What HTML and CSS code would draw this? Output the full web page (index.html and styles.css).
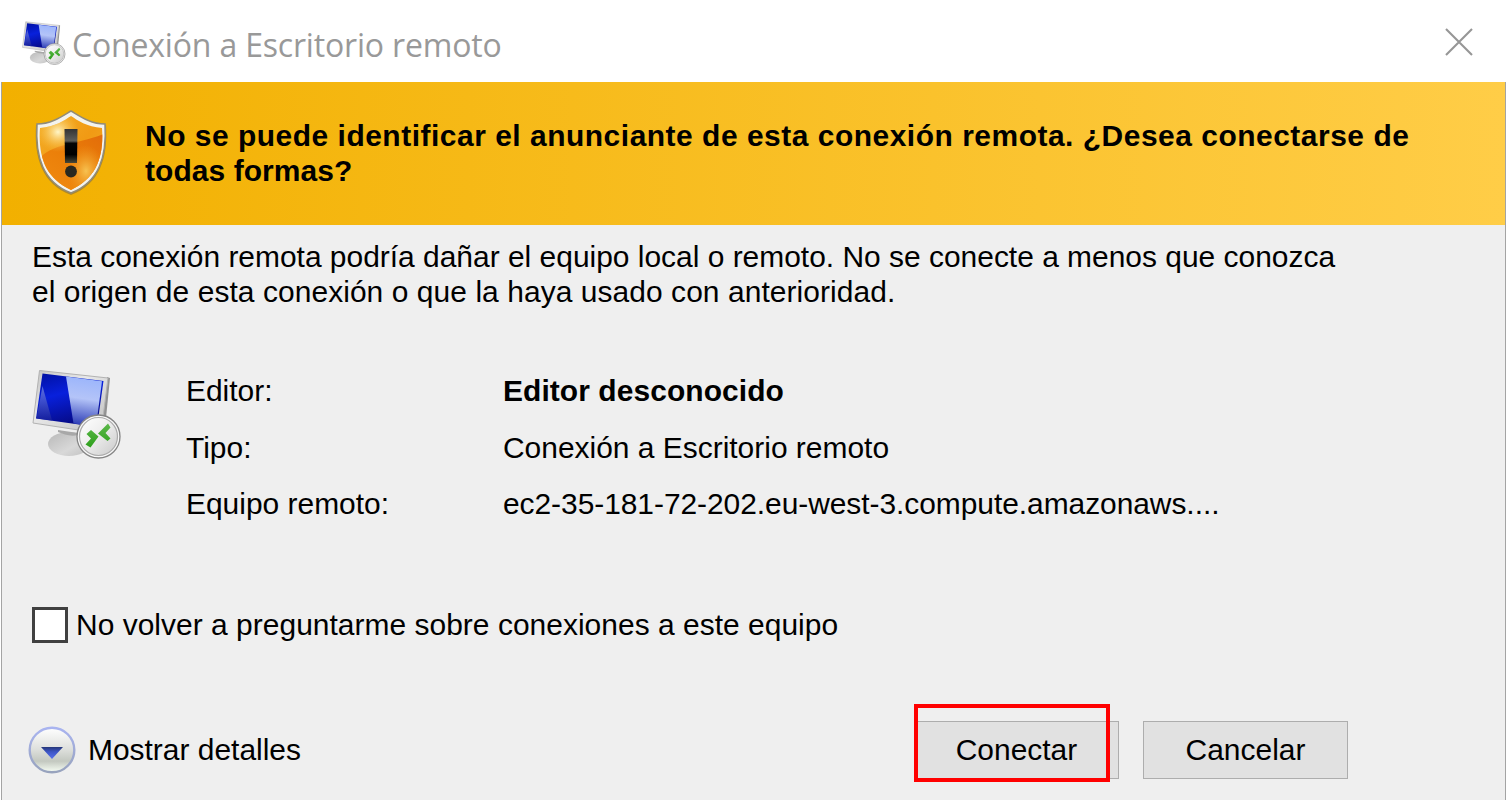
FILE: index.html
```html
<!DOCTYPE html>
<html lang="es">
<head>
<meta charset="utf-8">
<title>Conexión a Escritorio remoto</title>
<link rel="stylesheet" href="styles.css">
</head>
<body>
<svg width="0" height="0" class="defs" aria-hidden="true">
  <defs>
    <linearGradient id="screen" x1="0" y1="0" x2="0.35" y2="1"><stop offset="0" stop-color="#0010a0"/><stop offset=".45" stop-color="#0820dc"/><stop offset="1" stop-color="#060a86"/></linearGradient>
    <linearGradient id="glare" x1="0.1" y1="0" x2="0" y2="1"><stop offset="0" stop-color="#9db6fb"/><stop offset=".4" stop-color="#b4c4f8"/><stop offset="1" stop-color="#1c2cae"/></linearGradient>
    <linearGradient id="spark" x1="0" y1="0" x2="0" y2="1"><stop offset="0" stop-color="#8092ea"/><stop offset="1" stop-color="#1a249c"/></linearGradient>
    <linearGradient id="frame" x1="0" y1="0" x2="1" y2="1"><stop offset="0" stop-color="#c4c4c4"/><stop offset=".4" stop-color="#e8e8e8"/><stop offset="1" stop-color="#bdbdbd"/></linearGradient>
    <linearGradient id="foot" x1="0" y1="0" x2="1" y2="1"><stop offset="0" stop-color="#b8b8b8"/><stop offset=".6" stop-color="#d8d8d8"/><stop offset="1" stop-color="#c0c0c0"/></linearGradient>
    <linearGradient id="badge" x1="0" y1="0" x2="1" y2="1"><stop offset="0" stop-color="#fff"/><stop offset=".45" stop-color="#eee"/><stop offset="1" stop-color="#c9c9c9"/></linearGradient>
    <linearGradient id="green" x1="0" y1="0" x2="0" y2="1"><stop offset="0" stop-color="#5cb84a"/><stop offset="1" stop-color="#2ea01c"/></linearGradient>
    <symbol id="remote" viewBox="0 0 90 92">
      <ellipse cx="37" cy="76" rx="21" ry="12" fill="url(#foot)"/>
      <path d="M26 62 L46 65 L46 67 C38 69 32 66 26 64Z" fill="#a8a8a8"/>
      <path d="M75 9 L78 10 L73 60 L68 64 Z" fill="#929292"/>
      <path d="M7.500 2.500 L76 10 L69 65.500 L1 55 Z" fill="url(#frame)" stroke="#b2b2b2" stroke-width="1"/>
      <path d="M10.500 5.500 L71.500 13 L65 59 L4 50.500 Z" fill="url(#screen)"/>
      <path d="M34 8.500 L70 13.200 L64 58.500 L41.500 55.500 Z" fill="url(#glare)"/>
      <path d="M10.500 18 L20 52.500 L4.500 50.500 Z" fill="url(#spark)" opacity=".7"/>
      <circle cx="66.500" cy="68.500" r="21.500" fill="#f8f8f8" stroke="#858585" stroke-width="1.300"/>
      <circle cx="66.500" cy="68.500" r="19" fill="url(#badge)" stroke="#aaa" stroke-width="1.200"/>
      <path d="M54.500 66 L59 62 L66.500 68.500 L58.500 79.500 L53.500 76.500 L59 70.500 Z M66 65.500 L76 55.500 L78.500 59.500 L73.500 65 L78.500 70.500 L75.500 73 Z" fill="url(#green)"/>
    </symbol>
  </defs>
</svg>
<main class="dialog">
  <header class="titlebar">
    <svg class="title-icon"><use href="#remote"/></svg>
    <h1 class="title">Conexión a Escritorio remoto</h1>
    <svg class="close" viewBox="0 0 28 28"><path d="M1 1L27 27M27 1L1 27" stroke="#969696" stroke-width="2.100"/></svg>
  </header>
  <section class="banner">
    <svg class="shield" viewBox="0 0 76 92">
      <defs>
        <linearGradient id="sh" x1="0" y1="0" x2="1" y2="1"><stop offset="0" stop-color="#f4b12a"/><stop offset=".5" stop-color="#f19a14"/><stop offset="1" stop-color="#efb330"/></linearGradient>
        <linearGradient id="wave" x1="1" y1="0" x2=".2" y2="1"><stop offset="0" stop-color="#e26a0a"/><stop offset=".45" stop-color="#ea7d08"/><stop offset="1" stop-color="#f08a10"/></linearGradient>
        <radialGradient id="shine"><stop offset="0" stop-color="#fff6c8"/><stop offset="1" stop-color="#f8c040" stop-opacity="0"/></radialGradient>
        <radialGradient id="glow"><stop offset="0" stop-color="#f7c251"/><stop offset="1" stop-color="#f09a20" stop-opacity="0"/></radialGradient>
        <linearGradient id="mark" x1="0" y1="0" x2="0" y2="1"><stop offset="0" stop-color="#333"/><stop offset=".35" stop-color="#5e5e5a"/><stop offset=".42" stop-color="#050505"/><stop offset=".75" stop-color="#000"/><stop offset="1" stop-color="#4a4a3a"/></linearGradient>
        <clipPath id="inner"><path d="M37 7 C43 11 53 18 68 19 C70 47 63 69 37 81 C11 69 4 47 6 19 C21 18 31 11 37 7Z"/></clipPath>
      </defs>
      <path class="shield-shadow" d="M37 3 C45 9 56 16 72 16 C74 49 66 75 37 86 C8 75 0 49 2 16 C18 16 29 9 37 3Z" fill="#8b7440"/>
      <path d="M37 2 C44 6 56 15 71 15 C73 48 65 73 37 84 C9 73 1 48 3 15 C18 15 30 6 37 2Z" fill="#f3f3ef" stroke="#918b78" stroke-width="1.500"/>
      <g clip-path="url(#inner)">
        <path d="M0 0H76V92H0Z" fill="url(#sh)"/>
        <path d="M5 50C18 34 42 36 72 24V84H5Z" fill="url(#wave)"/>
        <ellipse cx="24" cy="23" rx="21" ry="20" fill="url(#shine)"/>
        <ellipse cx="52" cy="62" rx="19" ry="26" fill="url(#glow)"/>
      </g>
      <path d="M30.500 20H43.500L43 54H31Z" fill="url(#mark)"/>
      <circle cx="37" cy="62.500" r="5.900" fill="#292820"/>
    </svg>
    <p class="warning"><span class="warning-lead">No se puede identificar el anunciante de esta conexión remota. ¿Desea conectarse de</span><br><span class="warning-tail">todas formas?</span></p>
  </section>
  <section class="content">
    <p class="info"><span>Esta conexión remota podría dañar el equipo local o remoto. No se conecte a menos que conozca</span><br><span class="info-tail">el origen de esta conexión o que la haya usado con anterioridad.</span></p>
    <div class="details">
      <svg class="big-icon"><use href="#remote"/></svg>
      <dl class="fields">
        <dt>Editor:</dt><dd class="publisher"><span>Editor desconocido</span></dd>
        <dt>Tipo:</dt><dd><span>Conexión a Escritorio remoto</span></dd>
        <dt>Equipo remoto:</dt><dd><span class="host">ec2-35-181-72-202.eu-west-3.compute.amazonaws....</span></dd>
      </dl>
    </div>
    <label class="remember"><input type="checkbox" class="check"><span class="remember-label">No volver a preguntarme sobre conexiones a este equipo</span></label>
    <footer class="actions">
      <svg class="expander" viewBox="0 0 48 48">
        <defs><linearGradient id="ring" x1="0" y1="0" x2="0" y2="1"><stop offset="0" stop-color="#a9b4f0"/><stop offset="1" stop-color="#98a3bd"/></linearGradient>
        <linearGradient id="disc" x1="0" y1="0" x2="0" y2="1"><stop offset="0" stop-color="#fff"/><stop offset=".48" stop-color="#dee0dd"/><stop offset=".75" stop-color="#c3c8c0"/><stop offset="1" stop-color="#f8fff5"/></linearGradient>
        <linearGradient id="arrow" x1="0" y1="0" x2="0" y2="1"><stop offset="0" stop-color="#263778"/><stop offset=".4" stop-color="#3c55c5"/><stop offset="1" stop-color="#5871ed"/></linearGradient></defs>
        <circle cx="24" cy="24" r="22.300" fill="url(#disc)" stroke="url(#ring)" stroke-width="2.400"/>
        <path d="M13 21H35L24 33Z" fill="url(#arrow)"/>
      </svg>
      <span class="expand-label">Mostrar detalles</span>
      <div class="buttons">
        <button class="button connect">Conectar<span class="highlight"></span></button>
        <button class="button cancel">Cancelar</button>
      </div>
    </footer>
  </section>
</main>
</body>
</html>
```
FILE: styles.css
```css
* { box-sizing: border-box; }
body { margin: 0; background: #fff; font-family: "Liberation Sans", Arial, sans-serif; font-size: 29.95px; line-height: 35px; color: #000; overflow: hidden; }
.defs { position: absolute; }
h1, p, dl, dd { margin: 0; }
span { white-space: nowrap; }
.dialog { width: 1505px; height: 800px; margin-left: 1px; display: flex; flex-direction: column; }
.titlebar { height: 82px; flex: none; display: flex; align-items: center; padding: 7px 33px 0 21px; }
.title-icon { width: 44px; height: 46px; margin-bottom: 4px; }
.title { margin-left: 6px; font: 400 32px/44px "Open Sans", "Noto Sans", sans-serif; letter-spacing: -.18px; color: #999; white-space: nowrap; }
.close { width: 28px; height: 28px; margin-left: auto; margin-bottom: 5px; }
.banner { height: 143px; flex: none; border: 1px solid #a4a4a0; border-width: 0 1px 0 1px; background: linear-gradient(90deg, #f2b000, #ffcd47); display: flex; padding: 27px 0 0 32px; }
.shield { width: 76px; height: 92px; flex: none; }
.shield-shadow { opacity: .65; }
.warning { margin: 9px 0 0 35px; font-weight: 700; }
.warning-lead { letter-spacing: .52px; }
.warning-tail { letter-spacing: .08px; }
.content { flex: 1; background: #efefef; border: 1px solid #a4a4a4; border-width: 0 1px; padding-top: 14px; display: flex; flex-direction: column; }
.info { padding-left: 30px; }
.info-tail { letter-spacing: .07px; }
.details { display: flex; padding: 59px 0 0 30px; }
.big-icon { width: 90px; height: 92px; flex: none; }
.fields { display: grid; grid-template-columns: 317px auto; row-gap: 21.5px; margin: 5px 0 1px 64px; }
.publisher { font-weight: 700; letter-spacing: .08px; }
.host { letter-spacing: -.05px; }
.remember { display: flex; align-items: center; height: 36px; margin: 85px 0 0 30px; }
.check { appearance: none; width: 36px; height: 36px; margin: 0 8px 0 0; border: 3px solid #404040; background: #fff; }
.remember-label { margin-bottom: 2px; letter-spacing: .03px; }
.actions { display: flex; align-items: center; height: 58px; margin-top: 78px; padding: 0 157px 0 26px; }
.expander { width: 48px; height: 48px; }
.expand-label { margin: 0 0 2px 12px; }
.buttons { display: flex; gap: 24px; margin-left: auto; }
.button { position: relative; width: 205px; height: 58px; padding: 0 0 2px; border: 1px solid #adadad; background: #e1e1e1; color: #000; font: inherit; }
.highlight { position: absolute; left: -1px; top: -18px; width: 196px; height: 78px; border: 4px solid #f00; }
```
